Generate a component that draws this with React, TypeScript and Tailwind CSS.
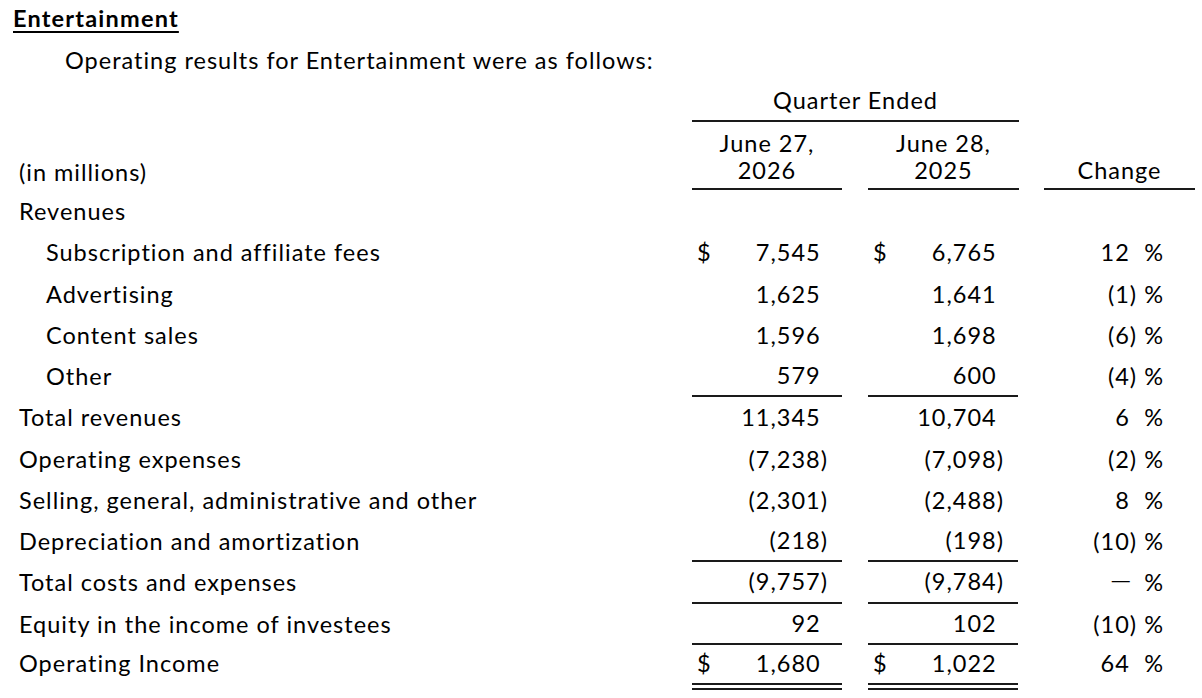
type Row = {
  label: string;
  indent?: boolean;
  a: string;
  b: string;
  c: string;
  dollar?: boolean;
  line?: "single" | "double";
};

const rows: Row[] = [
  { label: "Revenues", a: "", b: "", c: "" },
  { label: "Subscription and affiliate fees", indent: true, a: "7,545", b: "6,765", c: "12", dollar: true },
  { label: "Advertising", indent: true, a: "1,625", b: "1,641", c: "(1)" },
  { label: "Content sales", indent: true, a: "1,596", b: "1,698", c: "(6)" },
  { label: "Other", indent: true, a: "579", b: "600", c: "(4)", line: "single" },
  { label: "Total revenues", a: "11,345", b: "10,704", c: "6" },
  { label: "Operating expenses", a: "(7,238)", b: "(7,098)", c: "(2)" },
  { label: "Selling, general, administrative and other", a: "(2,301)", b: "(2,488)", c: "8" },
  { label: "Depreciation and amortization", a: "(218)", b: "(198)", c: "(10)", line: "single" },
  { label: "Total costs and expenses", a: "(9,757)", b: "(9,784)", c: "—", line: "single" },
  { label: "Equity in the income of investees", a: "92", b: "102", c: "(10)", line: "single" },
  { label: "Operating Income", a: "1,680", b: "1,022", c: "64", dollar: true, line: "double" },
];

// keeps digits aligned whether or not the value closes with a paren
function Num({ value }: { value: string }) {
  const neg = value.endsWith(")");
  return (
    <span className="whitespace-pre">
      {neg ? value.slice(0, -1) : value}
      <span className={neg ? "" : "invisible"}>)</span>
    </span>
  );
}

function Amount({ value, dollar, line }: { value: string; dollar?: boolean; line?: Row["line"] }) {
  const border =
    line === "double"
      ? "border-b-[7px] border-double border-[#1a1a1a]"
      : line === "single"
        ? "border-b-2 border-[#1a1a1a]"
        : "";
  return (
    <div className={`flex h-full w-[150px] items-center justify-between pl-[5px] pr-[14px] ${border}`}>
      <span>{dollar ? "$" : ""}</span>
      {value && <Num value={value} />}
    </div>
  );
}

export default function App() {
  return (
    <div className="h-[698px] w-[1202px] overflow-hidden bg-white font-['Lato',sans-serif] text-[23.5px] tracking-[1px] text-black">
      <div className="h-[36px] pl-[13px] leading-[36px]">
        <span className="font-bold tracking-[1.2px] underline decoration-2 underline-offset-[4px]">Entertainment</span>
      </div>
      <div className="h-[48px] pl-[65px] leading-[48px]">Operating results for Entertainment were as follows:</div>

      <div className="pl-[19px]">
        <div className="flex">
          <div className="w-[673px]" />
          <div className="h-[38px] w-[327px] border-b-2 border-[#1a1a1a] text-center leading-[32px]">Quarter Ended</div>
        </div>

        <div className="flex h-[68px] items-stretch">
          <div className="flex w-[673px] items-end pb-[4px] leading-[27px]">(in millions)</div>
          <div className="w-[150px] border-b-2 border-[#1a1a1a] pt-[8px] text-center leading-[27px]">
            June 27,
            <br />
            2026
          </div>
          <div className="w-[26px]" />
          <div className="w-[151px] border-b-2 border-[#1a1a1a] pt-[8px] text-center leading-[27px]">
            June 28,
            <br />
            2025
          </div>
          <div className="w-[25px]" />
          <div className="flex w-[151px] items-end justify-center border-b-2 border-[#1a1a1a] pb-[4px] leading-[27px]">Change</div>
        </div>

        <div className="pt-[1px]">
          {rows.map((r) => {
            const last = r.line === "double";
            return (
              <div key={r.label} className={`flex ${last ? "h-[45px]" : "h-[41.27px]"}`}>
                <div className={`flex w-[673px] items-center ${r.indent ? "pl-[27px]" : ""} ${last ? "pb-[7px]" : ""}`}>
                  {r.label}
                </div>
                <Amount value={r.a} dollar={r.dollar} line={r.line} />
                <div className="w-[26px]" />
                <Amount value={r.b} dollar={r.dollar} line={r.line} />
                <div className="w-[25px]" />
                <div className={`flex w-[151px] items-center justify-end pr-[30px] ${last ? "pb-[7px]" : ""}`}>
                  {r.c && (
                    <span className="whitespace-pre">
                      {r.c === "—" ? (
                        <>
                          <span className="relative -top-[5px] font-['Liberation_Sans',sans-serif] text-[18px] tracking-normal">—</span>
                          <span className="invisible">)</span>
                        </>
                      ) : (
                        <Num value={r.c} />
                      )}
                      {" %"}
                    </span>
                  )}
                </div>
              </div>
            );
          })}
        </div>
      </div>
    </div>
  );
}
